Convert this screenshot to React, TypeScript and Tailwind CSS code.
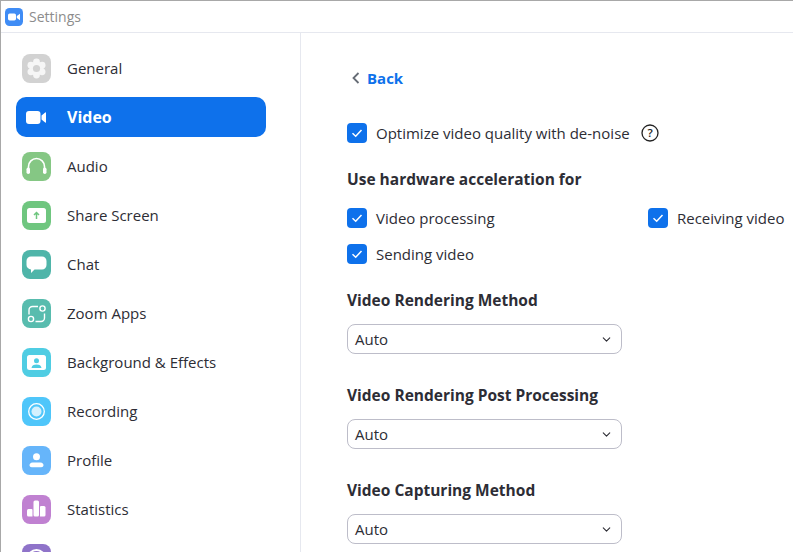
import { ChevronDown } from "lucide-react";
import type { ReactNode } from "react";

type NavItem = {
  label: string;
  color: string;
  icon: ReactNode;
  active?: boolean;
};

function IconSvg({ children }: { children: ReactNode }) {
  return (
    <svg viewBox="0 0 29 29" className="w-[29px] h-[29px]" fill="white">
      {children}
    </svg>
  );
}

const navItems: NavItem[] = [
  {
    label: "General",
    color: "bg-[#d2d2d2]",
    icon: (
      <IconSvg>
        <g fill="#f6f6f6">
          <circle cx="14.5" cy="14.5" r="7" />
          <circle cx="14.5" cy="8" r="3.4" />
          <circle cx="14.5" cy="21" r="3.4" />
          <circle cx="8.9" cy="11.2" r="3.4" />
          <circle cx="20.1" cy="11.2" r="3.4" />
          <circle cx="8.9" cy="17.8" r="3.4" />
          <circle cx="20.1" cy="17.8" r="3.4" />
        </g>
        <circle cx="14.5" cy="14.5" r="3.6" fill="#d2d2d2" />
      </IconSvg>
    ),
  },
  {
    label: "Video",
    color: "",
    active: true,
    icon: (
      <svg viewBox="0 0 29 29" className="w-[29px] h-[29px]" fill="white">
        <rect x="4" y="8" width="14.5" height="13" rx="3" />
        <path d="M19.5 12.5 23.2 9.4c.4-.3.8-.1.8.4v9.4c0 .5-.4.7-.8.4L19.5 16.500Z" />
      </svg>
    ),
  },
  {
    label: "Audio",
    color: "bg-[#85c784]",
    icon: (
      <IconSvg>
        <path
          d="M6.5 18v-3.5a8 8 0 0 1 16 0V18"
          fill="none"
          stroke="white"
          strokeWidth="1.6"
        />
        <rect x="4.5" y="15.5" width="3.5" height="6.5" rx="1.75" />
        <rect x="21" y="15.5" width="3.5" height="6.5" rx="1.75" />
      </IconSvg>
    ),
  },
  {
    label: "Share Screen",
    color: "bg-[#6fc67f]",
    icon: (
      <IconSvg>
        <rect x="5" y="7" width="19" height="15" rx="2.5" />
        <path
          d="M14.5 18v-6M12 14l2.5-2.5L17 14"
          fill="none"
          stroke="#6fc67f"
          strokeWidth="1.5"
        />
      </IconSvg>
    ),
  },
  {
    label: "Chat",
    color: "bg-[#4fb5a9]",
    icon: (
      <IconSvg>
        <path d="M9 6.5h11a4.5 4.5 0 0 1 4.5 4.5v4a4.5 4.5 0 0 1-4.5 4.5h-7.5L9 23v-3.6A4.5 4.5 0 0 1 4.5 15v-4A4.5 4.5 0 0 1 9 6.5Z" />
      </IconSvg>
    ),
  },
  {
    label: "Zoom Apps",
    color: "bg-[#58bcae]",
    icon: (
      <IconSvg>
        <g fill="none" stroke="white" strokeWidth="1.4">
          <circle cx="20.5" cy="9.5" r="2.6" />
          <circle cx="9" cy="20" r="2.6" />
          <path d="M16 7.5h-5.5a3.5 3.5 0 0 0-3.5 3.5v4.5" />
          <path d="M13.5 22.5H19a3.5 3.5 0 0 0 3.5-3.5v-4.5" />
        </g>
      </IconSvg>
    ),
  },
  {
    label: "Background & Effects",
    color: "bg-[#4fcde3]",
    icon: (
      <IconSvg>
        <rect x="5" y="7" width="19" height="15" rx="2.5" />
        <circle cx="14.5" cy="12.8" r="2.5" fill="#4fcde3" />
        <path d="M9.5 20c.2-2.3 2.2-3.4 5-3.4s4.8 1.1 5 3.4Z" fill="#4fcde3" />
      </IconSvg>
    ),
  },
  {
    label: "Recording",
    color: "bg-[#4fc6fa]",
    icon: (
      <IconSvg>
        <circle cx="14.5" cy="14.5" r="7.8" fill="none" stroke="white" strokeWidth="1.3" />
        <circle cx="14.5" cy="14.5" r="5" fill="#d4f1fe" />
      </IconSvg>
    ),
  },
  {
    label: "Profile",
    color: "bg-[#66b5fa]",
    icon: (
      <IconSvg>
        <circle cx="14.5" cy="10.8" r="3.5" />
        <path d="M10.5 16.5h8c2 0 3 1.5 3 2.8 0 1.2-1 2-2.3 2h-9.4c-1.3 0-2.3-.8-2.3-2 0-1.3 1-2.8 3-2.8Z" />
      </IconSvg>
    ),
  },
  {
    label: "Statistics",
    color: "bg-[#c081d1]",
    icon: (
      <IconSvg>
        <path d="M5 15.500a1.500 1.500 0 0 1 1.500-1.500h3a1 1 0 0 1 1 1v6.500H6.500A1.500 1.500 0 0 1 5 20Z" />
        <rect x="11.500" y="5.500" width="5.500" height="16" rx="1.500" />
        <path d="M18 12a1 1 0 0 1 1-1h3a1.500 1.500 0 0 1 1.500 1.500V20a1.500 1.500 0 0 1-1.500 1.500h-4Z" />
      </IconSvg>
    ),
  },
  {
    label: "",
    color: "bg-[#8f73c9]",
    icon: (
      <IconSvg>
        <circle cx="14.5" cy="14.5" r="8.5" fill="none" stroke="white" strokeWidth="2" />
      </IconSvg>
    ),
  },
];

function Checkbox() {
  return (
    <span className="w-5 h-5 rounded-[4px] bg-[#0e71eb] flex items-center justify-center shrink-0">
      <svg viewBox="0 0 20 20" className="w-5 h-5" fill="none">
        <path d="M5.5 10.3 8.7 13.3 14.5 7" stroke="white" strokeWidth="1.5" />
      </svg>
    </span>
  );
}

function CheckRow({ label, children }: { label: string; children?: ReactNode }) {
  return (
    <div className="flex items-center gap-[9px] h-5 whitespace-nowrap">
      <Checkbox />
      <span>{label}</span>
      {children}
    </div>
  );
}

function SelectBlock({ title }: { title: string }) {
  return (
    <div className="h-[95px]">
      <div className="font-bold text-[15.5px] h-5 leading-5">{title}</div>
      <div className="mt-[14px] w-[275px] h-[30px] border border-[#bdbdc9] rounded-lg flex items-center justify-between pl-[7px] pr-[8px]">
        <span>Auto</span>
        <ChevronDown className="w-[13px] h-[13px] text-[#2d2d35]" strokeWidth={2} />
      </div>
    </div>
  );
}

export default function App() {
  return (
    <div
      className="w-[793px] h-[552px] overflow-hidden bg-white text-[#2d2d35] text-[15px] flex flex-col border-t border-l border-[#a8a8a8]"
      style={{ fontFamily: '"Open Sans", "Noto Sans", sans-serif' }}
    >
      <div className="h-[32px] shrink-0 flex items-center gap-[6px] pl-[4px] border-b border-[#e6e8ef]">
        <svg viewBox="0 0 18 18" className="w-[18px] h-[18px]">
          <rect width="18" height="18" rx="4.5" fill="#3f8cf5" />
          <rect x="3" y="5.5" width="8" height="7" rx="1.7" fill="white" />
          <path d="M11.8 8 15 5.8v6.4L11.8 10Z" fill="white" />
        </svg>
        <span className="text-[#8c8c8c] text-[14px]">Settings</span>
      </div>
      <div className="flex flex-1 min-h-0">
        <div className="w-[300px] shrink-0 border-r border-[#e6e8ef] pt-[15px] pl-[15px] flex flex-col gap-[9px]">
          {navItems.map((item, i) => (
            <div
              key={i}
              className={`w-[250px] h-10 shrink-0 rounded-[10px] flex items-center pl-[6px] ${
                item.active ? "bg-[#0e71eb] text-white font-bold text-[16px]" : ""
              }`}
            >
              <span className={`w-[29px] h-[29px] rounded-lg shrink-0 ${item.color}`}>
                {item.icon}
              </span>
              <span className="ml-4">{item.label}</span>
            </div>
          ))}
        </div>
        <div className="flex-1 pl-[46px] pt-[35px] min-w-0">
          <div className="flex items-center h-5 gap-[7px] pl-[5px]">
            <svg viewBox="0 0 8 12" className="w-2 h-3" fill="none">
              <path d="M6.5 1 1.5 6l5 5" stroke="#666c75" strokeWidth="1.8" />
            </svg>
            <span className="font-bold text-[#0e71eb]">Back</span>
          </div>
          <div className="mt-[35px]">
            <CheckRow label="Optimize video quality with de-noise">
              <svg viewBox="0 0 18 18" className="w-[18px] h-[18px] ml-[2px]" fill="none">
                <circle cx="9" cy="9" r="8" stroke="#222" strokeWidth="1.3" />
                <text x="9" y="13" textAnchor="middle" fontSize="11.5" fontWeight="600" fill="#222">
                  ?
                </text>
              </svg>
            </CheckRow>
          </div>
          <div className="mt-[26px] font-bold h-5 leading-5 text-[15.5px]">
            Use hardware acceleration for
          </div>
          <div className="mt-[19px] grid grid-cols-[301px_1fr] gap-y-4">
            <CheckRow label="Video processing" />
            <CheckRow label="Receiving video" />
            <CheckRow label="Sending video" />
          </div>
          <div className="mt-[26px]">
            <SelectBlock title="Video Rendering Method" />
            <SelectBlock title="Video Rendering Post Processing" />
            <SelectBlock title="Video Capturing Method" />
          </div>
        </div>
      </div>
    </div>
  );
}
